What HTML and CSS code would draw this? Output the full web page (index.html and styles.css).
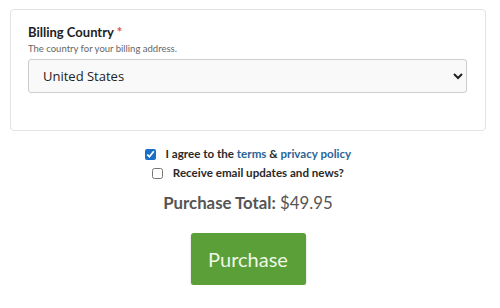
FILE: index.html
```html
<!DOCTYPE html>
<html lang="en">
<head>
  <meta charset="UTF-8" />
  <title>Checkout</title>
  <link rel="stylesheet" href="styles.css">
</head>
<body>
  <div class="card">
    <label class="field-label" for="country">Billing Country <span class="req">*</span></label>
    <div class="field-help">The country for your billing address.</div>
    <select class="field-select" id="country">
      <option>United States</option>
      <option>Canada</option>
    </select>
  </div>

  <div class="agree">
    <label class="check-row"><input type="checkbox" checked> I agree to the <a href="#">terms</a> &amp; <a href="#">privacy policy</a></label>
    <label class="check-row"><input type="checkbox"> Receive email updates and news?</label>
  </div>

  <div class="total"><b>Purchase Total:</b> $49.95</div>

  <div class="actions">
    <button class="buy">Purchase</button>
  </div>
</body>
</html>
```

FILE: styles.css
```css
body {
  margin: 0;
  padding-right: 4px;
  background: #fff;
  font-family: Lato, sans-serif;
  color: #222;
}
.card {
  margin: 9px 10px 0 10px;
  height: 122px;
  box-sizing: border-box;
  border: 1px solid #e3e3e3;
  border-radius: 4px;
  padding: 13px 18px 0 17px;
}
.field-label {
  display: block;
  font-weight: 700;
  font-size: 13px;
  line-height: 18px;
  color: #222;
}
.req {
  color: #d9534f;
}
.field-help {
  font-size: 9.5px;
  color: #666;
  line-height: 14px;
  margin-top: 1px;
}
.field-select {
  display: block;
  width: 100%;
  height: 34px;
  margin-top: 3px;
  padding: 0 10px;
  font-family: "Open Sans", sans-serif;
  font-size: 13px;
  color: #222;
  background: #f9f9f9;
  border: 1px solid #ccc;
  border-radius: 3px;
}
.agree {
  margin-top: 15px;
  display: flex;
  flex-direction: column;
  align-items: center;
  gap: 3px;
}
.check-row {
  font-size: 11.6px;
  font-weight: 700;
  color: #2a2a2a;
  line-height: 16px;
  display: flex;
  align-items: center;
  white-space: pre;
}
.check-row input {
  width: 11px;
  height: 11px;
  margin: 0 7px 0 0;
  accent-color: #1a6fc9;
}
.check-row a {
  color: #2a6496;
  text-decoration: none;
}
.total {
  margin-top: 11px;
  text-align: center;
  font-size: 16.8px;
  color: #555;
}
.total b {
  font-weight: 700;
}
.actions {
  margin-top: 20px;
  text-align: center;
}
.buy {
  width: 115px;
  height: 52px;
  background: #5a9f37;
  color: #eef7e8;
  border: none;
  border-radius: 3px;
  box-shadow: 0 1px 2px rgba(0,0,0,0.25);
  font-family: Lato, sans-serif;
  font-size: 20px;
}
```
